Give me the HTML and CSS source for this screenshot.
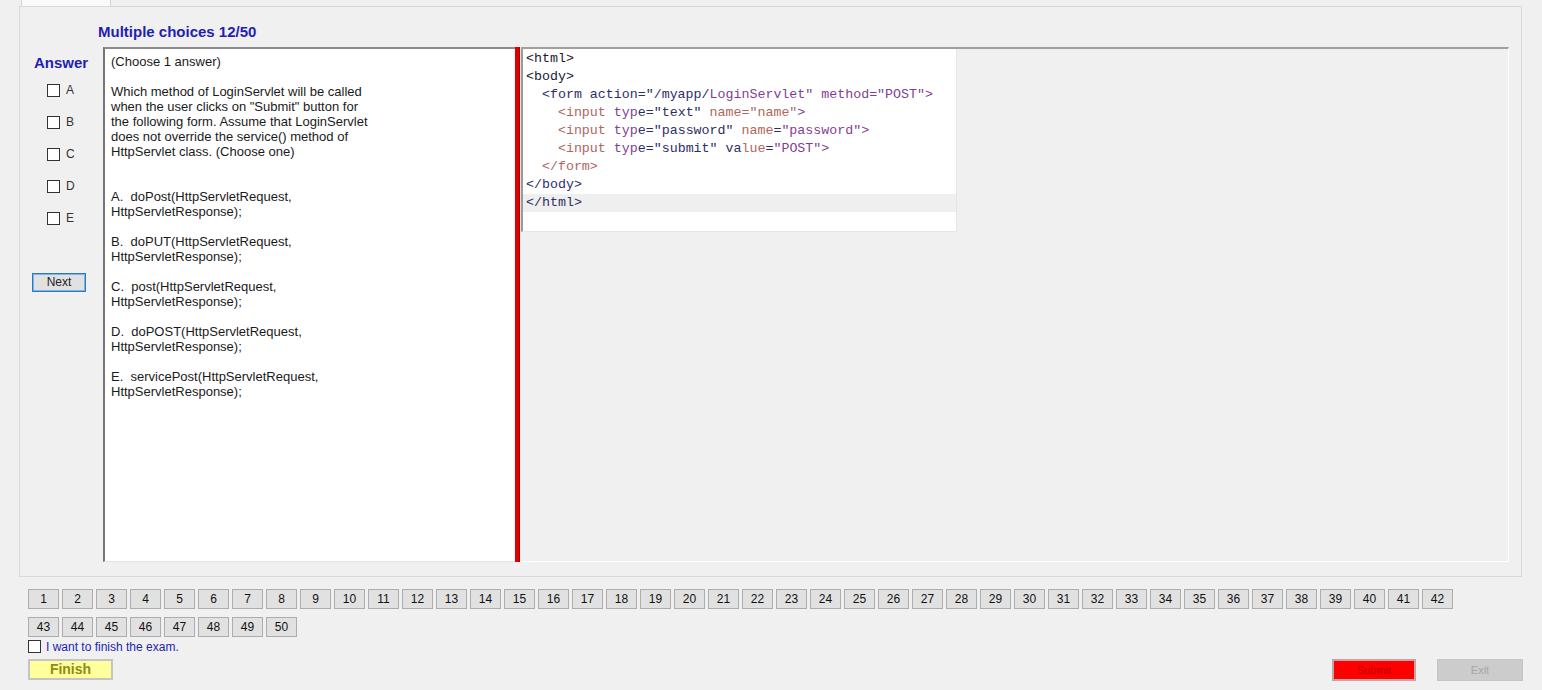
FILE: index.html
```html
<!DOCTYPE html>
<html>
<head>
<meta charset="utf-8">
<title>Exam</title>
<link rel="stylesheet" href="styles.css">
</head>
<body>
<div class="tabstrip"><div class="tab"></div></div>
<div class="tabpage">
  <div class="title">Multiple choices 12/50</div>
  <div class="content">
    <div class="answers">
      <div class="answer-label">Answer</div>
      <div class="opts">
        <div class="opt"><span class="cb"></span><span>A</span></div>
        <div class="opt"><span class="cb"></span><span>B</span></div>
        <div class="opt"><span class="cb"></span><span>C</span></div>
        <div class="opt"><span class="cb"></span><span>D</span></div>
        <div class="opt"><span class="cb"></span><span>E</span></div>
      </div>
      <div class="next">Next</div>
    </div>
    <div class="question">
      <p>(Choose 1 answer)</p>
      <p>Which method of LoginServlet will be called<br>when the user clicks on "Submit" button for<br>the following form. Assume that LoginServlet<br>does not override the service() method of<br>HttpServlet class. (Choose one)</p>
      <p class="first-choice">A.&nbsp; doPost(HttpServletRequest,<br>HttpServletResponse);</p>
      <p>B.&nbsp; doPUT(HttpServletRequest,<br>HttpServletResponse);</p>
      <p>C.&nbsp; post(HttpServletRequest,<br>HttpServletResponse);</p>
      <p>D.&nbsp; doPOST(HttpServletRequest,<br>HttpServletResponse);</p>
      <p>E.&nbsp; servicePost(HttpServletRequest,<br>HttpServletResponse);</p>
    </div>
    <div class="splitter"></div>
    <div class="right">
      <div class="code">
        <div class="ln"><span class="k">&lt;html&gt;</span></div>
        <div class="ln"><span class="k">&lt;body&gt;</span></div>
        <div class="ln">  <span class="n">&lt;form action="/myapp/</span><span class="p">LoginServlet" method="POST"&gt;</span></div>
        <div class="ln">    <span class="t">&lt;input</span> <span class="p">typ</span><span class="n">e="text" </span><span class="t">name="name"</span><span class="p">&gt;</span></div>
        <div class="ln">    <span class="t">&lt;input</span> <span class="p">typ</span><span class="n">e="password" </span><span class="t">name</span><span class="n">=</span><span class="p">"password"&gt;</span></div>
        <div class="ln">    <span class="t">&lt;input</span> <span class="p">typ</span><span class="n">e="submit" va</span><span class="t">lue</span><span class="n">=</span><span class="p">"POST"&gt;</span></div>
        <div class="ln">  <span class="t">&lt;/form&gt;</span></div>
        <div class="ln"><span class="n">&lt;/body&gt;</span></div>
        <div class="ln cur"><span class="n">&lt;/html&gt;</span></div>
      </div>
    </div>
  </div>
</div>
<div class="navgrid">
  <div class="num">1</div><div class="num">2</div><div class="num">3</div><div class="num">4</div><div class="num">5</div><div class="num">6</div><div class="num">7</div><div class="num">8</div><div class="num">9</div><div class="num">10</div>
  <div class="num">11</div><div class="num">12</div><div class="num">13</div><div class="num">14</div><div class="num">15</div><div class="num">16</div><div class="num">17</div><div class="num">18</div><div class="num">19</div><div class="num">20</div>
  <div class="num">21</div><div class="num">22</div><div class="num">23</div><div class="num">24</div><div class="num">25</div><div class="num">26</div><div class="num">27</div><div class="num">28</div><div class="num">29</div><div class="num">30</div>
  <div class="num">31</div><div class="num">32</div><div class="num">33</div><div class="num">34</div><div class="num">35</div><div class="num">36</div><div class="num">37</div><div class="num">38</div><div class="num">39</div><div class="num">40</div>
  <div class="num">41</div><div class="num">42</div><div class="num">43</div><div class="num">44</div><div class="num">45</div><div class="num">46</div><div class="num">47</div><div class="num">48</div><div class="num">49</div><div class="num">50</div>
</div>
<div class="finish-check"><span class="cb"></span><span>I want to finish the exam.</span></div>
<div class="actions">
  <div class="finish">Finish</div>
  <div class="right-actions">
    <div class="submit">Submit</div>
    <div class="exit">Exit</div>
  </div>
</div>
</body>
</html>
```
FILE: styles.css
```css
* { box-sizing: border-box; }
html, body { margin: 0; padding: 0; }
body {
  background: #f0f0f0;
  font-family: "Liberation Sans", Arial, sans-serif;
  width: 1542px;
  height: 690px;
  overflow: hidden;
  color: #222;
}
.tabstrip { height: 6px; display: flex; }
.tab {
  margin-left: 21px;
  width: 90px;
  height: 6px;
  background: #fafafa;
  border-left: 1px solid #d4d4d4;
  border-right: 1px solid #d4d4d4;
}
.tabpage {
  margin-left: 19px;
  width: 1503px;
  height: 571px;
  border: 1px solid #d9d9d9;
  background: #f0f0f0;
  padding: 0 12px 14px 0;
  display: flex;
  flex-direction: column;
}
.title {
  margin-top: 16px;
  padding-left: 78px;
  font-weight: bold;
  font-size: 15px;
  line-height: 18px;
  color: #1f1fb4;
}
.content {
  margin-top: 6px;
  flex: 1;
  display: flex;
}
.answers {
  width: 83px;
  padding-left: 12px;
  display: flex;
  flex-direction: column;
  align-items: flex-start;
}
.answer-label {
  margin-top: 7px;
  margin-left: 2px;
  font-weight: bold;
  font-size: 15px;
  line-height: 18px;
  color: #1f1fb4;
}
.opts { margin-top: 2px; }
.opt {
  height: 32px;
  display: flex;
  align-items: center;
  padding-left: 15px;
  gap: 6px;
  font-size: 12px;
  color: #333;
}
.cb {
  display: inline-block;
  width: 13px;
  height: 13px;
  background: #fff;
  border: 1px solid #333;
}
.next {
  margin-top: 39px;
  width: 54px;
  height: 19px;
  border: 1px solid #2a78c8;
  box-shadow: inset 0 0 0 1px #7fb4e6;
  background: #e1e1e1;
  font-size: 12px;
  line-height: 17px;
  text-align: center;
  color: #222;
}
.question {
  width: 412px;
  background: #fff;
  border-left: 2px solid #767676;
  border-top: 2px solid #8c8c8c;
  border-bottom: 1px solid #e4e4e4;
  padding: 5px 6px 0 6px;
  font-size: 13px;
  line-height: 15px;
  color: #1a1a1a;
}
.question p { margin: 0 0 15px 0; white-space: nowrap; }
.question p.first-choice { margin-top: 30px; }
.splitter {
  width: 5px;
  background: #e10000;
  border-right: 1px solid #b00000;
}
.right {
  flex: 1;
  margin-left: 1px;
  border-top: 2px solid #a0a0a0;
  border-right: 1px solid #fff;
  border-bottom: 1px solid #fff;
}
.code {
  width: 436px;
  height: 183px;
  background: #fff;
  border-left: 2px solid #9a9a9a;
  border-right: 1px solid #e6e6e6;
  border-bottom: 1px solid #e6e6e6;
  padding-top: 1px;
  font-family: "Liberation Mono", "Courier New", monospace;
  font-size: 13.3px;
  line-height: 18px;
}
.ln { padding-left: 3px; height: 18px; white-space: pre; }
.ln.cur { background: #efefef; }
.k { color: #1a1a33; }
.n { color: #2e2e66; }
.p { color: #7f3f94; }
.t { color: #b0665e; }
.navgrid {
  margin: 12px 0 0 28px;
  width: 1428px;
  display: flex;
  flex-wrap: wrap;
  gap: 8px 3px;
}
.num {
  width: 31px;
  height: 20px;
  background: #e1e1e1;
  border: 1px solid #adadad;
  font-size: 12px;
  line-height: 18px;
  text-align: center;
  color: #111;
}
.finish-check {
  margin: 3px 0 0 28px;
  height: 13px;
  display: flex;
  align-items: center;
  gap: 5px;
  font-size: 12px;
  color: #2323b0;
}
.actions {
  margin-top: 6px;
  padding: 0 19px 0 28px;
  display: flex;
  justify-content: space-between;
  align-items: flex-start;
}
.finish {
  width: 85px;
  height: 21px;
  background: #ffff9c;
  border: 2px solid #c4c4c4;
  font-weight: bold;
  font-size: 14px;
  line-height: 17px;
  text-align: center;
  color: #8c8c14;
}
.right-actions { display: flex; gap: 21px; }
.submit {
  width: 84px;
  height: 22px;
  background: #ff0000;
  border: 2px solid #c4a4a4;
  font-size: 11px;
  line-height: 18px;
  text-align: center;
  color: #c00000;
}
.exit {
  width: 86px;
  height: 22px;
  background: #cccccc;
  border: 1px solid #c4c4c4;
  font-size: 11px;
  line-height: 20px;
  text-align: center;
  color: #a6a6a6;
}
```
